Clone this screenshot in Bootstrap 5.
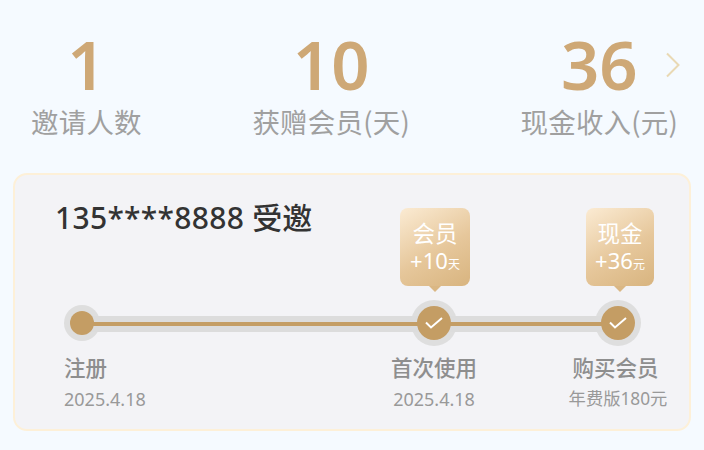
<!DOCTYPE html>
<html lang="zh">
<head>
<meta charset="utf-8">
<title>邀请记录</title>
<link rel="stylesheet" href="https://cdn.jsdelivr.net/npm/bootstrap@5.3.0/dist/css/bootstrap.min.css">
<style>
html,body{height:100%;overflow:hidden}
body{background:#f5faff;font-family:"Noto Sans CJK SC","Noto Sans",sans-serif}
.stats{position:relative;padding:31px 26px 0 31px;height:173px}
.stat-num{font-size:67px;line-height:66px;font-weight:600;color:#cea876;font-family:"Noto Sans","Noto Sans CJK SC",sans-serif}
.stat-lab{font-size:27.5px;line-height:36px;letter-spacing:.2px;color:#a0a0a0;margin-top:6px;white-space:nowrap}
.stat-arrow{position:absolute;left:665px;top:52px}
.invite{margin:0 13px;height:258px;background:#f3f3f6;border:2px solid #fdf0d8;border-radius:14px;padding:33px 0 0 49px}
.flow{display:grid;grid-template-columns:320px 100px 84px 100px;grid-template-rows:83px 46px auto;row-gap:9px}
.who{grid-column:1;grid-row:1;margin:-11px 0 0 -9px;font-size:30px;line-height:38px;font-weight:500;letter-spacing:.3px;color:#333;white-space:nowrap;font-family:"Noto Sans","Noto Sans CJK SC",sans-serif}
.who span{font-family:"Noto Sans CJK SC",sans-serif;letter-spacing:0}
.tip{position:relative;justify-self:center;grid-row:1;height:78px;border-radius:8px;background:linear-gradient(150deg,#fbebd3 0%,#e6c79b 55%,#d8b47f 100%);color:#fff;text-align:center;padding-top:9px}
.tip::after{content:"";position:absolute;left:50%;top:100%;margin-left:-6px;border:6px solid transparent;border-top-color:#dab784;border-bottom:0}
.tip-a{grid-column:2;width:70px;transform:translateX(1px)}
.tip-b{grid-column:4;width:68px;transform:translateX(2px)}
.tip-t{font-size:22.5px;line-height:30px}
.tip-n{font-size:22px;line-height:26px;font-family:"Noto Sans","Noto Sans CJK SC",sans-serif}
.tip-n small{font-size:12px;font-family:"Noto Sans CJK SC",sans-serif}
.halo{grid-row:2;align-self:center;border-radius:50%;background:#dedede}
.rail{grid-column:1/-1;grid-row:2;align-self:center;height:16px;margin:2px 50px 0 17px;background:#dcdcdc;display:flex;align-items:center}
.rail-in{height:4px;width:100%;background:#c49d64}
.dot{grid-row:2;align-self:center;border-radius:50%;display:flex;align-items:center;justify-content:center;background:#c49d64}
.halo-s{grid-column:1;justify-self:start;width:36px;height:36px}
.dot-s{grid-column:1;justify-self:start;width:24px;height:24px;margin-left:6px}
.halo-l{width:46px;height:46px;justify-self:center}
.dot-l{width:34px;height:34px;justify-self:center}
.at-2{grid-column:2}
.at-4{grid-column:4}
.step{grid-row:3;margin-top:-3px;color:#8e8e8e;white-space:nowrap}
.step-1{grid-column:1}
.step-2{grid-column:2;text-align:center}
.step-3{grid-column:4;text-align:center}
.step-3 .step-t{margin-left:-5px}
.step-t{font-size:21.5px;line-height:30px;font-weight:500}
.step-d{font-size:18px;line-height:24px;margin-top:5px;color:#999;font-family:"Noto Sans","Noto Sans CJK SC",sans-serif}
.step-f{font-size:17.3px}
</style>
</head>
<body>
<div class="stats d-flex justify-content-between text-center">
  <div><div class="stat-num">1</div><div class="stat-lab">邀请人数</div></div>
  <div><div class="stat-num">10</div><div class="stat-lab">获赠会员(天)</div></div>
  <div><div class="stat-num">36</div><div class="stat-lab">现金收入(元)</div></div>
  <svg class="stat-arrow" width="16" height="26" viewBox="0 0 16 26" fill="none" stroke="#e9d9b4" stroke-width="2"><path d="M2 1.5 13.5 13 2 24.5"/></svg>
</div>
<div class="invite">
  <div class="flow">
    <div class="who">135****8888 <span>受邀</span></div>
    <div class="tip tip-a"><div class="tip-t">会员</div><div class="tip-n">+10<small>天</small></div></div>
    <div class="tip tip-b"><div class="tip-t">现金</div><div class="tip-n">+36<small>元</small></div></div>
    <div class="halo halo-s"></div>
    <div class="halo halo-l at-2"></div>
    <div class="halo halo-l at-4"></div>
    <div class="rail"><div class="rail-in"></div></div>
    <div class="dot dot-s"></div>
    <div class="dot dot-l at-2"><svg width="20" height="14" viewBox="0 0 20 14" fill="none" stroke="#fff" stroke-width="2"><path d="M2 6.5 7 11.5 18 2"/></svg></div>
    <div class="dot dot-l at-4"><svg width="20" height="14" viewBox="0 0 20 14" fill="none" stroke="#fff" stroke-width="2"><path d="M2 6.5 7 11.5 18 2"/></svg></div>
    <div class="step step-1"><div class="step-t">注册</div><div class="step-d">2025.4.18</div></div>
    <div class="step step-2"><div class="step-t">首次使用</div><div class="step-d">2025.4.18</div></div>
    <div class="step step-3"><div class="step-t">购买会员</div><div class="step-d step-f">年费版180元</div></div>
  </div>
</div>
<script src="https://cdn.jsdelivr.net/npm/bootstrap@5.3.0/dist/js/bootstrap.bundle.min.js"></script>
</body>
</html>
